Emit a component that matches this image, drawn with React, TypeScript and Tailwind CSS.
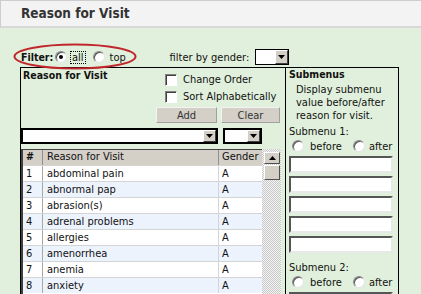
const rows = [
  'abdominal pain',
  'abnormal pap',
  'abrasion(s)',
  'adrenal problems',
  'allergies',
  'amenorrhea',
  'anemia',
  'anxiety',
];

function Radio({ checked }: { checked?: boolean }) {
  return (
    <span className="flex h-[12px] w-[12px] shrink-0 items-center justify-center rounded-full border border-[#8a8a8a] border-b-[#e4e4e4] border-r-[#e4e4e4] bg-white shadow-[inset_1px_1px_0_#505050]">
      {checked && <span className="h-[4px] w-[4px] rounded-full bg-black" />}
    </span>
  );
}

function Checkbox() {
  return <span className="h-[12px] w-[12px] shrink-0 border border-[#808080] border-b-white border-r-white bg-white shadow-[inset_1px_1px_0_#404040]" />;
}

function Arrow({ up }: { up?: boolean }) {
  return (
    <svg width="7" height="4" viewBox="0 0 7 4">
      <path d={up ? 'M0 4h7L3.5 0z' : 'M0 0h7L3.5 4z'} fill="#000" />
    </svg>
  );
}

function Select({ className }: { className: string }) {
  return (
    <div className={`flex h-[16px] shrink-0 border border-black bg-white ${className}`}>
      <div className="flex-1" />
      <div className="flex w-[13px] items-center justify-center border border-t-white border-l-white border-b-[#404040] border-r-[#404040] bg-[#d4d0c8]">
        <Arrow />
      </div>
    </div>
  );
}

function TextBox() {
  return <div className="h-[17px] w-[104px] shrink-0 border-2 border-t-[#555] border-l-[#555] border-b-[#e8e8e8] border-r-[#e8e8e8] bg-white" />;
}

function RadioRow() {
  return (
    <div className="mt-[1px] flex h-[14px] shrink-0 items-center pl-[3px]">
      <Radio />
      <span className="ml-[6px] w-[43px]">before</span>
      <Radio />
      <span className="ml-[4px]">after</span>
    </div>
  );
}

export default function App() {
  return (
    <div className="relative h-[294px] w-[421px] overflow-hidden bg-[#e1f0dc] font-['DejaVu_Sans_Condensed','Liberation_Sans',sans-serif] text-[11px] leading-[13px] text-[#111]">
      <div className="flex h-[28px] items-center border-t border-l border-[#cdcdcd] border-b-2 border-b-[#d8d8d8] bg-[#f3f3f3] pl-[20px] text-[13.5px] font-bold text-[#333]">
        Reason for Visit
      </div>

      <div className="mt-[21px] flex h-[16px] items-center">
        <span className="ml-[21px] w-[34px] text-[10.5px] font-bold">Filter:</span>
        <Radio checked />
        <span className="ml-[3px] border border-dotted border-black px-[1px] leading-[11px]">all</span>
        <span className="ml-[7px]">
          <Radio />
        </span>
        <span className="ml-[5px] w-[60px]">top</span>
        <span className="w-[85px]">filter by gender:</span>
        <Select className="w-[34px]" />
      </div>

      <svg className="absolute left-[13px] top-[43px]" width="124" height="27" viewBox="0 0 124 27">
        <ellipse cx="62" cy="13.5" rx="60.5" ry="12" fill="none" stroke="#c0272d" strokeWidth="2" />
      </svg>

      <div className="mt-[2px] flex pl-[20px]">
        <div className="flex h-[240px] w-[266px] flex-col overflow-hidden border border-black">
          <div className="flex h-[60px] shrink-0">
            <div className="flex-1 pl-[2px] pt-[1px] text-[10.5px] font-bold">Reason for Visit</div>
            <div className="mr-[4px] flex w-[125px] flex-col pt-[3px]">
              <div className="flex h-[17px] items-center gap-[6px] pl-[9px]">
                <Checkbox />
                <span>Change Order</span>
              </div>
              <div className="flex h-[17px] items-center gap-[6px] pl-[9px]">
                <Checkbox />
                <span>Sort Alphabetically</span>
              </div>
              <div className="mt-[2px] flex gap-[4px]">
                <button className="h-[16px] w-[61px] border border-t-[#f4f4f4] border-l-[#f4f4f4] border-b-[#a0a0a0] border-r-[#a0a0a0] bg-[#d4d0c8] text-[#333]">Add</button>
                <button className="h-[16px] w-[59px] border border-t-[#f4f4f4] border-l-[#f4f4f4] border-b-[#a0a0a0] border-r-[#a0a0a0] bg-[#d4d0c8] text-[#333]">Clear</button>
              </div>
            </div>
          </div>

          <div className="flex shrink-0 gap-[5px]">
            <Select className="w-[197px] border-2" />
            <Select className="w-[39px] border-2" />
          </div>

          <div className="mt-[5px] flex min-h-0 flex-1">
            <div className="w-[241px] shrink-0 border-t border-l-2 border-[#404040] bg-white">
              <div className="flex h-[15px] items-center bg-[#d4d0c8]">
                <div className="h-full w-[20px] border-r border-[#909090] pl-[3px] text-[10.5px] font-bold">#</div>
                <div className="h-full w-[176px] border-r border-[#909090] pl-[4px]">Reason for Visit</div>
                <div className="h-full flex-1 pl-[3px]">Gender</div>
              </div>
              {rows.map((r, i) => (
                <div key={r} className={`flex h-[16px] items-center border-t border-[#d4d4d4] ${i % 2 ? 'bg-[#edf3fd]' : 'bg-white'}`}>
                  <div className="h-full w-[20px] border-r border-[#a8a8a8] pl-[3px] leading-[15px]">{i + 1}</div>
                  <div className="h-full w-[176px] border-r border-[#d4d4d4] pl-[4px] leading-[15px]">{r}</div>
                  <div className="h-full flex-1 pl-[3px] leading-[15px]">A</div>
                </div>
              ))}
            </div>
            <div className="w-[19px] shrink-0 bg-[repeating-conic-gradient(#c8c8c8_0_25%,#f4f4f4_0_50%)] bg-[length:2px_2px] pl-[2px] pt-[3px]">
              <div className="flex h-[12px] w-[16px] items-center justify-center border border-t-white border-l-white border-b-[#505050] border-r-[#505050] bg-[#d4d0c8]">
                <Arrow up />
              </div>
              <div className="mt-[1px] h-[15px] w-[16px] border border-t-white border-l-white border-b-[#505050] border-r-[#505050] bg-[#d4d0c8]" />
            </div>
          </div>
        </div>

        <div className="flex h-[240px] w-[113px] flex-col overflow-hidden border border-l-0 border-black pl-[3px]">
          <div className="shrink-0 text-[10.5px] font-bold">Submenus</div>
          <div className="mt-[2px] shrink-0 pl-[7px]">
            <div>Display submenu</div>
            <div>value before/after</div>
            <div>reason for visit.</div>
          </div>
          <div className="mt-[3px] shrink-0">Submenu 1:</div>
          <RadioRow />
          <div className="mt-[3px] flex shrink-0 flex-col gap-[3px]">
            <TextBox />
            <TextBox />
            <TextBox />
            <TextBox />
            <TextBox />
          </div>
          <div className="mt-[8px] shrink-0">Submenu 2:</div>
          <RadioRow />
          <div className="mt-[3px] shrink-0">
            <TextBox />
          </div>
        </div>
      </div>
    </div>
  );
}
